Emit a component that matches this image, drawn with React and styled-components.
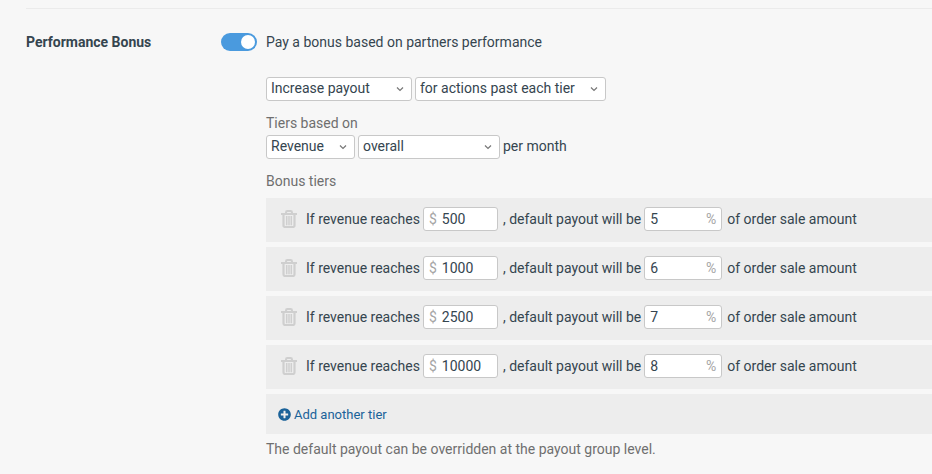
import { useState } from "react";
import styled, { createGlobalStyle } from "styled-components";
import { FaPlusCircle } from "react-icons/fa";

const DEFAULT_TIERS = [
  { id: 1, revenue: "500", payout: "5" },
  { id: 2, revenue: "1000", payout: "6" },
  { id: 3, revenue: "2500", payout: "7" },
  { id: 4, revenue: "10000", payout: "8" },
];

function TrashIcon() {
  return (
    <svg width="16" height="18" viewBox="0 0 16 18" fill="none" stroke="currentColor">
      <path d="M5 3.5V2.4Q5 1 6.4 1h3.2Q11 1 11 2.4v1.1" strokeWidth="2" />
      <path d="M0 4h16" strokeWidth="2" />
      <path d="M2.5 4.5v10.8Q2.5 17 4 17h8q1.5 0 1.5-1.7V4.5" strokeWidth="2.2" />
      <path d="M5.7 6v9.2M8 6v9.2M10.3 6v9.2" strokeWidth="1.5" />
    </svg>
  );
}

function Dropdown({ label, width, options }) {
  return (
    <SelectBox width={width}>
      <select aria-label={label}>
        {options.map((o) => (
          <option key={o}>{o}</option>
        ))}
      </select>
      <svg width="8" height="6" viewBox="0 0 8 6" fill="none" stroke="currentColor">
        <path d="M1 1.5l3 3 3-3" strokeWidth="1.2" />
      </svg>
    </SelectBox>
  );
}

function Tier({ tier, onChange, onRemove }) {
  return (
    <TierRow>
      <TrashButton type="button" aria-label="Remove tier" onClick={onRemove}>
        <TrashIcon />
      </TrashButton>
      <label htmlFor={`revenue-${tier.id}`}>If revenue reaches</label>
      <Field width="75px">
        <span>$</span>
        <input
          id={`revenue-${tier.id}`}
          value={tier.revenue}
          onChange={(e) => onChange({ ...tier, revenue: e.target.value })}
        />
      </Field>
      <label htmlFor={`payout-${tier.id}`}>, default payout will be</label>
      <Field width="78px">
        <input
          id={`payout-${tier.id}`}
          value={tier.payout}
          onChange={(e) => onChange({ ...tier, payout: e.target.value })}
        />
        <span>%</span>
      </Field>
      <span>of order sale amount</span>
    </TierRow>
  );
}

export default function App() {
  const [enabled, setEnabled] = useState(true);
  const [tiers, setTiers] = useState(DEFAULT_TIERS);

  const updateTier = (next) =>
    setTiers(tiers.map((t) => (t.id === next.id ? next : t)));
  const removeTier = (id) => setTiers(tiers.filter((t) => t.id !== id));
  const addTier = () =>
    setTiers([...tiers, { id: Date.now(), revenue: "", payout: "" }]);

  return (
    <>
      <GlobalStyle />
      <Section>
        <Title>Performance Bonus</Title>
        <Toggle
          id="bonus"
          type="checkbox"
          role="switch"
          checked={enabled}
          onChange={(e) => setEnabled(e.target.checked)}
        />
        <Content>
          <ToggleLabel htmlFor="bonus">
            Pay a bonus based on partners performance
          </ToggleLabel>
          <Controls>
            <Dropdown
              label="Payout change"
              width="146px"
              options={["Increase payout", "Decrease payout"]}
            />
            <Dropdown
              label="Applies to"
              width="191px"
              options={["for actions past each tier", "for all actions"]}
            />
          </Controls>
          <Hint>Tiers based on</Hint>
          <Controls>
            <Dropdown label="Metric" width="89px" options={["Revenue", "Actions"]} />
            <Dropdown label="Scope" width="142px" options={["overall", "per item"]} />
            <Suffix>per month</Suffix>
          </Controls>
          <Hint>Bonus tiers</Hint>
          <TierList>
            {tiers.map((tier) => (
              <Tier
                key={tier.id}
                tier={tier}
                onChange={updateTier}
                onRemove={() => removeTier(tier.id)}
              />
            ))}
            <AddRow>
              <AddButton type="button" onClick={addTier}>
                <FaPlusCircle />
                <span>Add another tier</span>
              </AddButton>
            </AddRow>
          </TierList>
          <Note>The default payout can be overridden at the payout group level.</Note>
        </Content>
      </Section>
    </>
  );
}

const GlobalStyle = createGlobalStyle`
  * {
    box-sizing: border-box;
  }
  body {
    margin: 0;
    background: #f7f7f7;
    color: #35454f;
    font-family: Roboto, "Liberation Sans", sans-serif;
    font-size: 14px;
    line-height: 20px;
  }
  input,
  select,
  button {
    margin: 0;
    font: inherit;
    color: inherit;
  }
`;

const Section = styled.section`
  display: grid;
  grid-template-columns: 195px 45px 1fr;
  align-items: start;
  margin: 8px 0 0 26px;
  padding: 23px 0 14px;
  border-top: 1px solid #ebebeb;
`;

const Title = styled.h2`
  margin: 0;
  font-size: 14px;
  font-weight: 700;
`;

const Toggle = styled.input`
  appearance: none;
  display: flex;
  width: 36px;
  height: 18px;
  margin: 1px 0;
  padding: 2px;
  border-radius: 9px;
  background: #4a9ade;
  cursor: pointer;
  &::before {
    content: "";
    width: 14px;
    height: 14px;
    margin-left: auto;
    border-radius: 50%;
    background: #fff;
  }
  &:not(:checked) {
    background: #bbb;
  }
  &:not(:checked)::before {
    margin-left: 0;
  }
`;

const Content = styled.div`
  min-width: 0;
`;

const ToggleLabel = styled.label`
  display: block;
  margin-bottom: 25px;
`;

const Controls = styled.div`
  display: flex;
  align-items: center;
  gap: 3px;
  white-space: nowrap;
`;

const SelectBox = styled.div`
  display: grid;
  align-items: center;
  flex: none;
  width: ${({ width }) => width};
  select,
  svg {
    grid-area: 1 / 1;
  }
  select {
    appearance: none;
    width: 100%;
    height: 24px;
    padding: 0 20px 2px 4px;
    border: 1px solid #c8c8c8;
    border-radius: 3px;
    background: #fff;
  }
  svg {
    justify-self: end;
    margin-right: 8px;
    color: #777;
    pointer-events: none;
  }
`;

const Suffix = styled.span`
  padding-bottom: 2px;
`;

const Hint = styled.div`
  margin-top: 12px;
  padding-bottom: 2px;
  color: #6f6f6f;
`;

const TierList = styled.div`
  display: grid;
  gap: 5px;
  margin-top: 5px;
`;

const TierRow = styled.div`
  display: flex;
  align-items: center;
  gap: 3px;
  height: 44px;
  padding: 0 15px 2px;
  background: #ededed;
  white-space: nowrap;
`;

const TrashButton = styled.button`
  display: flex;
  margin-right: 6px;
  padding: 0;
  border: 0;
  background: none;
  color: #cfcfcf;
  cursor: pointer;
`;

const Field = styled.div`
  display: flex;
  align-items: center;
  flex: none;
  gap: 5px;
  width: ${({ width }) => width};
  height: 24px;
  margin-right: 2px;
  padding: 0 5px;
  border: 1px solid #c8c8c8;
  border-radius: 3px;
  background: #fff;
  input {
    flex: 1;
    min-width: 0;
    padding: 0;
    border: 0;
    outline: 0;
    background: none;
  }
  span {
    color: #a5a5a5;
  }
`;

const AddRow = styled.div`
  display: flex;
  align-items: center;
  height: 40px;
  padding: 0 12px;
  background: #ededed;
`;

const AddButton = styled.button`
  display: flex;
  align-items: center;
  gap: 3px;
  padding: 0;
  border: 0;
  background: none;
  color: #1a6299;
  font-size: 13px;
  cursor: pointer;
  span {
    padding-top: 2px;
  }
`;

const Note = styled.p`
  margin: 5px 0 0;
  color: #6f6f6f;
`;
